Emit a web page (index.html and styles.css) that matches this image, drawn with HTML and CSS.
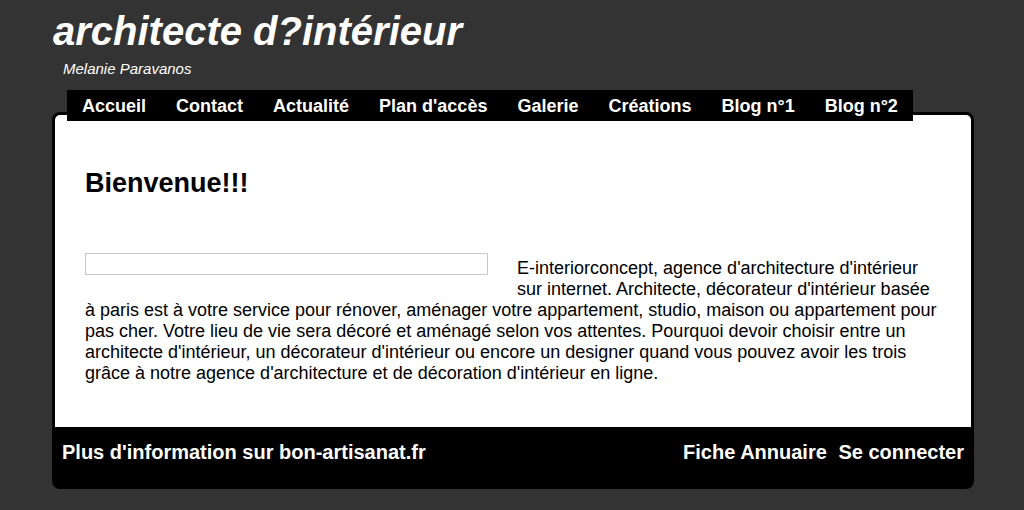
FILE: index.html
```html
<!DOCTYPE html>
<html lang="fr">
<head>
    <meta charset="UTF-8">
    <title>architecte d?intérieur</title>
    <link rel="stylesheet" href="styles.css">
</head>
<body>
    <div class="page">
        <div class="header">
            <h1 class="site-title">architecte d?intérieur</h1>
            <div class="site-owner">Melanie Paravanos</div>
        </div>

        <ul class="menu">
            <li><a href="#">Accueil</a></li>
            <li><a href="#">Contact</a></li>
            <li><a href="#">Actualité</a></li>
            <li><a href="#">Plan d'accès</a></li>
            <li><a href="#">Galerie</a></li>
            <li><a href="#">Créations</a></li>
            <li><a href="#">Blog n°1</a></li>
            <li><a href="#">Blog n°2</a></li>
        </ul>

        <div class="box">
            <div class="content">
                <h2>Bienvenue!!!</h2>
                <div class="intro">
                    <div class="picture"></div>
                    <p>E-interiorconcept, agence d'architecture d'intérieur sur internet. Architecte, décorateur d'intérieur basée à paris est à votre service pour rénover, aménager votre appartement, studio, maison ou appartement pour pas cher. Votre lieu de vie sera décoré et aménagé selon vos attentes. Pourquoi devoir choisir entre un architecte d'intérieur, un décorateur d'intérieur ou encore un designer quand vous pouvez avoir les trois grâce à notre agence d'architecture et de décoration d'intérieur en ligne.</p>
                </div>
            </div>
            <div class="footer">
                <div class="footer-left">
                    <span>Plus d'information sur</span>
                    <a href="#">bon-artisanat.fr</a>
                </div>
                <div class="footer-right">
                    <a href="#">Fiche Annuaire</a>
                    <a href="#">Se connecter</a>
                </div>
            </div>
        </div>
    </div>
</body>
</html>
```

FILE: styles.css
```css
body {
 margin: 0;
 background-color: #333333;
 font-family: "Liberation Sans", Arial, sans-serif;
 color: #fff;
}

.page {
 width: 922px;
 margin: 0 auto 0 52px;
}

.header {
 padding-top: 8px;
}

.site-title {
 margin: 0;
 padding-left: 1px;
 font-size: 40px;
 font-style: italic;
 font-weight: bold;
 line-height: 46px;
}

.site-owner {
 margin: 6px 0 0 11px;
 font-size: 15px;
 font-style: italic;
 line-height: 18px;
}

.menu {
 display: flex;
 width: fit-content;
 margin: 12px 0 0 15px;
 padding: 0;
 list-style: none;
 background-color: #000;
 position: relative; /* sits over the top edge of the box */
 z-index: 1;
}

.menu a {
 display: block;
 padding: 1px 15px 0;
 line-height: 30px;
 font-size: 18px;
 font-weight: bold;
 color: #fff;
 text-decoration: none;
}

.box {
 margin-top: -9px;
 border: 3px solid #000;
 border-radius: 8px;
 background-color: #000;
 overflow: hidden;
}

.content {
 background-color: #fff;
 color: #000;
 padding: 53px 30px 43px;
 min-height: 215px;
}

.content h2 {
 margin: 0 0 54px;
 font-size: 27px;
 line-height: 31px;
}

.intro {
 font-size: 18px;
 line-height: 21px;
}

.picture {
 float: left;
 width: 401px;
 height: 20px;
 border: 1px solid #c8c8c8;
 margin: 0 29px 10px 0;
}

.intro p {
 margin: 0;
 padding-top: 5px;
}

.footer {
 display: flex;
 justify-content: space-between;
 padding: 14px 7px 0;
 height: 45px;
 font-size: 20px;
 font-weight: bold;
 line-height: 23px;
}

.footer a {
 color: #fff;
 text-decoration: none;
}

.footer-right a {
 margin-left: 6px;
}
```
